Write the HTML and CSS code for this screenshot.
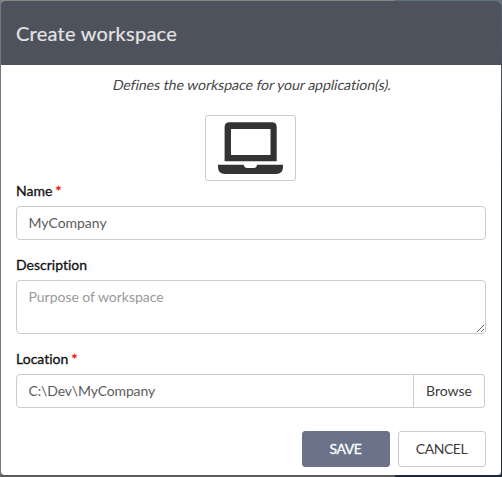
FILE: index.html
```html
<!DOCTYPE html>
<html lang="en">
<head>
<meta charset="utf-8">
<title>Create workspace</title>
<link rel="stylesheet" href="styles.css">
</head>
<body>
<form class="modal">
  <header class="modal-header"><h1>Create workspace</h1></header>
  <div class="modal-body">
    <p class="intro">Defines the workspace for your application(s).</p>
    <button type="button" class="icon-button" aria-label="Workspace icon">
      <svg width="67" height="54" viewBox="0 0 67 54">
        <path fill="#333" fill-rule="evenodd" d="M12.300 1.300h42.700q4.700 0 4.700 4.700v34.300H7.600V6q0-4.700 4.700-4.700zM14 8v26h39.500V8z"/>
        <path fill="#333" d="M1 43.700h25.700q.7 3.300 3.500 3.300h6.600q2.800 0 3.200-3.300h26v2.300q0 7-7 7H8q-7 0-7-7z"/>
      </svg>
    </button>
    <label class="label" for="name">Name <span class="required">*</span></label>
    <input class="control" id="name" type="text" value="MyCompany">
    <label class="label" for="description">Description</label>
    <textarea class="control area" id="description" placeholder="Purpose of workspace"></textarea>
    <label class="label" for="location">Location <span class="required">*</span></label>
    <div class="group">
      <input class="control path" id="location" type="text" value="C:\Dev\MyCompany">
      <button type="button" class="browse">Browse</button>
    </div>
  </div>
  <footer class="actions">
    <button type="button" class="btn primary">SAVE</button>
    <button type="button" class="btn">CANCEL</button>
  </footer>
</form>
</body>
</html>
```

FILE: styles.css
```css
* { box-sizing: border-box; }
body {
  margin: 0;
  height: 477px;
  padding: 1px 1px 2px;
  overflow: hidden;
  font-family: Lato, sans-serif;
  font-size: 14px;
  color: #333;
  background:
    linear-gradient(#526674, #23303c 35%, #23303c) right / 1px 100% no-repeat,
    linear-gradient(90deg, #858783 395px, #5c7280 395px) top / 100% 1px no-repeat,
    linear-gradient(90deg, #5c5c5c 395px, #1d2a35 395px) bottom / 100% 2px no-repeat,
    #777;
}
.modal {
  height: 474px;
  background: #fff;
  border-radius: 4px;
  overflow: hidden;
}
.modal-header {
  height: 64px;
  padding: 0 15px;
  display: flex;
  align-items: center;
  background: #4e525d;
}
h1 {
  margin: 0;
  font-size: 20px;
  line-height: 24px;
  font-weight: 400;
  letter-spacing: .25px;
  color: #e3e3e3;
  -webkit-text-stroke: .2px currentColor;
}
.modal-body {
  padding: 10px 15px 0;
  display: flex;
  flex-direction: column;
}
.intro {
  margin: 0 0 0 2px;
  align-self: center;
  line-height: 20px;
  letter-spacing: -.01px;
  color: #444;
  transform: skewX(-12deg);
}
.icon-button {
  align-self: center;
  width: 91px;
  height: 66px;
  margin: 20px 1px 0 0;
  padding: 0;
  display: flex;
  align-items: center;
  justify-content: center;
  background: #fff;
  border: 1px solid #ccc;
  border-radius: 3px;
}
.label {
  line-height: 20px;
  margin-bottom: 5px;
  color: #111;
  letter-spacing: .01px;
  -webkit-text-stroke: .3px currentColor;
}
.required { margin-left: -.5px; color: red; }
.control {
  width: 100%;
  height: 34px;
  margin: 0 0 15px;
  padding: 5px 12px 7px 11.5px;
  font: inherit;
  line-height: 20px;
  letter-spacing: -.03px;
  color: #5c5c5c;
  background: #fff;
  border: 1px solid #ccc;
  border-radius: 4px;
}
.area { height: 54px; padding-top: 6px; resize: vertical; }
.path { letter-spacing: -.15px; }
.control::placeholder { color: #999; }
.group { display: flex; padding-right: 1px; }
.group .control {
  flex: 1;
  min-width: 0;
  margin: 0;
  border-radius: 4px 0 0 4px;
}
.browse {
  width: 72px;
  height: 34px;
  margin-left: -1px;
  padding: 0 0 2px;
  font: inherit;
  color: #3c3c3c;
  background: #fff;
  border: 1px solid #ccc;
  border-radius: 0 3px 3px 0;
}
.actions {
  display: flex;
  justify-content: flex-end;
  gap: 8px;
  padding: 23px 15px 0;
}
.btn {
  width: 88px;
  height: 36px;
  padding: 0 1px 2px 0;
  font: inherit;
  letter-spacing: -.45px;
  color: #3c3c3c;
  background: #fff;
  border: 1px solid #ccc;
  border-radius: 3px;
}
.primary {
  color: #fff;
  background: #6a738a;
  border-color: #6a738a;
  -webkit-text-stroke: .3px currentColor;
}
```
